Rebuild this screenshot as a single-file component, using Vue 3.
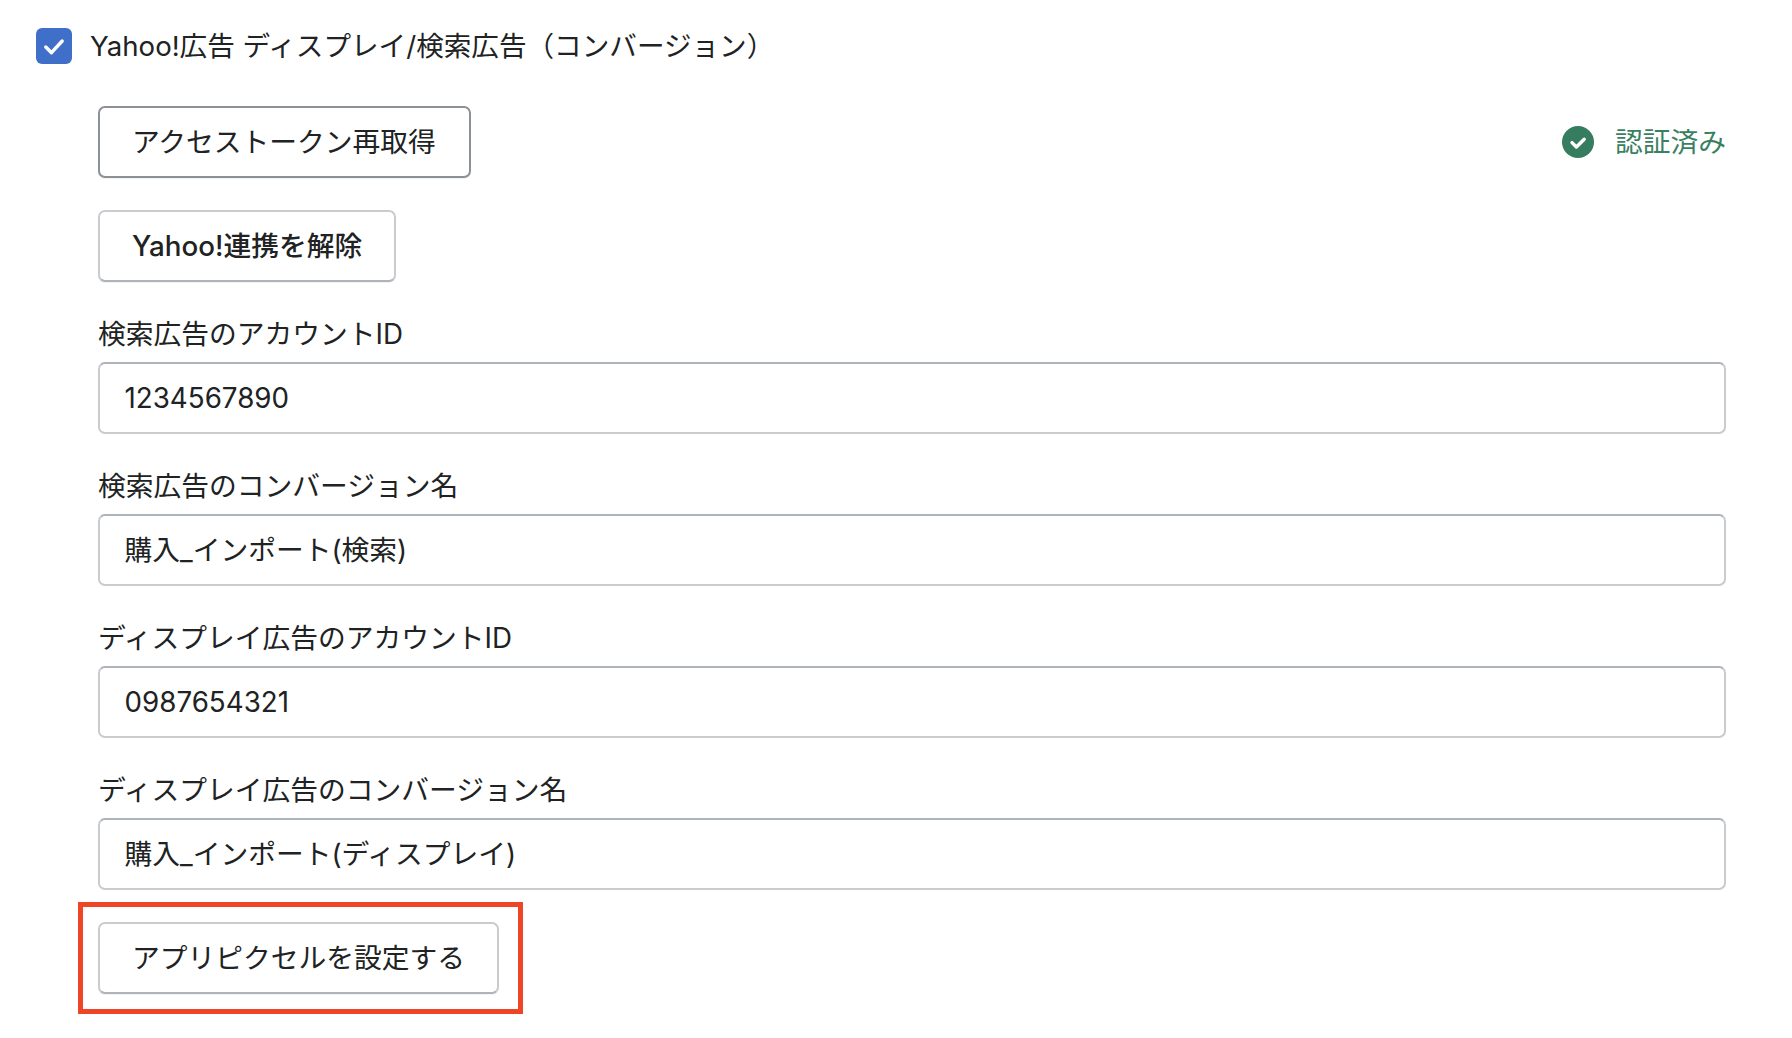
<script setup>
const fields = [
  { label: '検索広告のアカウントID', value: '1234567890' },
  { label: '検索広告のコンバージョン名', value: '購入_インポート(検索)' },
  { label: 'ディスプレイ広告のアカウントID', value: '0987654321' },
  { label: 'ディスプレイ広告のコンバージョン名', value: '購入_インポート(ディスプレイ)' }
]
</script>

<template>
  <div class="page">
    <div class="check-row">
      <span class="checkbox">
        <svg viewBox="0 0 36 36" width="36" height="36">
          <path d="M9.8 19l5.7 5.7L26.2 13" fill="none" stroke="#fff" stroke-width="3.4" stroke-linecap="round" stroke-linejoin="round" />
        </svg>
      </span>
      <span class="check-label">Yahoo!広告 ディスプレイ/検索広告（コンバージョン）</span>
    </div>

    <div class="content">
      <div class="auth-row">
        <button class="btn btn_dark">アクセストークン再取得</button>
        <div class="status">
          <svg viewBox="0 0 32 32" width="32" height="32">
            <circle cx="16" cy="16" r="16" fill="#367c5f" />
            <path d="M10 16.6l4.4 4.4 7.8-7.8" fill="none" stroke="#fff" stroke-width="3.4" stroke-linecap="round" stroke-linejoin="round" />
          </svg>
          <span>認証済み</span>
        </div>
      </div>

      <button class="btn btn_medium">Yahoo!連携を解除</button>

      <div v-for="field in fields" :key="field.label" class="field">
        <div class="field__label">{{ field.label }}</div>
        <div class="field__input">{{ field.value }}</div>
      </div>

      <div class="pixel-wrap">
        <button class="btn">アプリピクセルを設定する</button>
        <span class="highlight"></span>
      </div>
    </div>
  </div>
</template>

<style>
body {
  background: #fff;
}
</style>

<style scoped>
.page {
  height: 1038px;
  box-sizing: border-box;
  padding: 28px 66px 0 36px;
  font-family: Inter, "Noto Sans CJK JP", sans-serif;
  font-size: 27.75px;
  line-height: 40px;
  color: #202223;
  overflow: hidden;
}

.check-row {
  display: flex;
  align-items: center;
  gap: 18px;
  height: 36px;
}

.checkbox {
  display: block;
  width: 36px;
  height: 36px;
  border-radius: 6px;
  background: #3f6fc9;
}

.checkbox svg {
  display: block;
}

.check-label {
  font-size: 27.6px;
}

.content {
  margin-top: 42px;
  margin-left: 62px;
}

.auth-row {
  display: flex;
  align-items: center;
  justify-content: space-between;
  margin-bottom: 32px;
}

.status {
  display: flex;
  align-items: center;
  gap: 21px;
  color: #3b7f62;
}

.status svg {
  display: block;
}

.btn {
  display: block;
  height: 72px;
  box-sizing: border-box;
  padding: 0 32px;
  background: #fff;
  border: 2px solid #c9cccf;
  border-bottom-color: #aeb4b9;
  border-radius: 7px;
  font: inherit;
  color: inherit;
  box-shadow: 0 1px 0 rgba(0, 0, 0, 0.05);
}

.btn_dark {
  padding: 0 33px 0 32px;
  border-color: #8c9196;
}

.btn_medium {
  padding: 0 32px;
  font-weight: 500;
}

.field {
  margin-top: 32px;
}

.field__label {
  margin-bottom: 8px;
}

.field__input {
  height: 72px;
  box-sizing: border-box;
  padding: 0 24.5px;
  display: flex;
  align-items: center;
  border: 2px solid #c9cccf;
  border-top-color: #aeb4b9;
  border-radius: 7px;
  background: #fff;
}

.pixel-wrap {
  position: relative;
  width: fit-content;
  margin-top: 32px;
}

.highlight {
  position: absolute;
  top: -20px;
  left: -20px;
  right: -24px;
  bottom: -20px;
  border: 5px solid #ee4527;
  pointer-events: none;
}
</style>
